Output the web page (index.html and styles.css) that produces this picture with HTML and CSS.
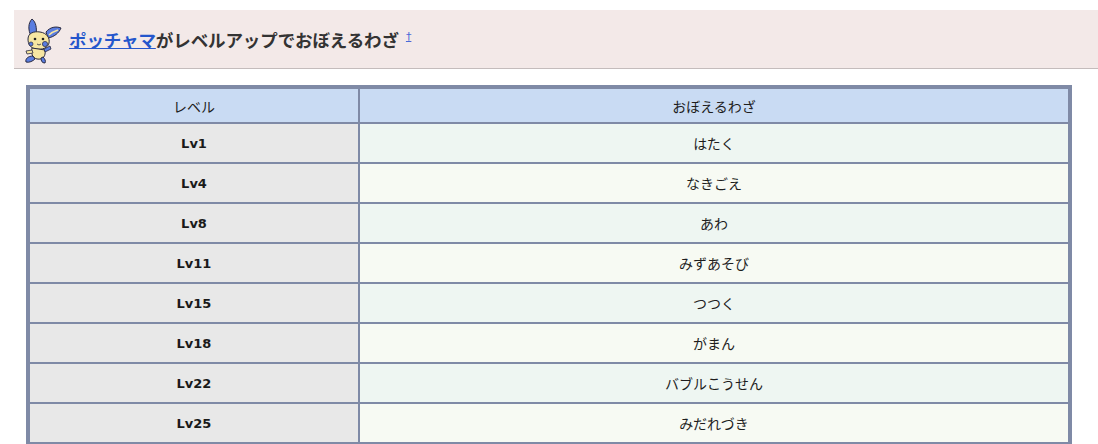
FILE: index.html
```html
<!DOCTYPE html>
<html lang="ja">
<head>
<meta charset="utf-8">
<title>ポッチャマがレベルアップでおぼえるわざ</title>
<link rel="stylesheet" href="styles.css">
</head>
<body>
<div class="page">
  <h2 class="title">
    <svg class="sprite" width="42" height="46" viewBox="0 0 42 46" aria-hidden="true">
      <path d="M10 1 C6 5 6 12 9 18 L14 17 C15 10 14 4 10 1 Z" fill="#5a7de0" stroke="#2a2a40" stroke-width="1"/>
      <path d="M24 14 C28 9 34 8 39 10 C37 15 32 19 26 20 Z" fill="#5a7de0" stroke="#2a2a40" stroke-width="1"/>
      <path d="M27 17 C30 14 33 13 36 12" stroke="#f6e6a2" stroke-width="1.5" fill="none"/>
      <path d="M6 21 C6 15 12 13 18 14 C25 15 28 20 27 25 C26 30 20 32 14 31 C8 30 6 26 6 21 Z" fill="#f6e6a2" stroke="#2a2a40" stroke-width="1"/>
      <circle cx="13" cy="21" r="1.3" fill="#222"/>
      <circle cx="21" cy="21" r="1.3" fill="#222"/>
      <circle cx="23" cy="26" r="2.6" fill="#5a7de0" stroke="#2a2a40" stroke-width="0.7"/>
      <circle cx="9" cy="26" r="2" fill="#5a7de0" stroke="#2a2a40" stroke-width="0.7"/>
      <path d="M15 26 Q17 28 19 26" stroke="#2a2a40" stroke-width="0.8" fill="none"/>
      <path d="M10 30 C9 35 10 40 15 41 C21 42 24 38 23 32 Z" fill="#f6e6a2" stroke="#2a2a40" stroke-width="1"/>
      <path d="M22 31 L28 28 L29 31 L23 34 Z" fill="#5a7de0" stroke="#2a2a40" stroke-width="0.8"/>
      <path d="M10 32 L4 33 L5 36 L11 35 Z" fill="#f6e6a2" stroke="#2a2a40" stroke-width="0.8"/>
      <path d="M11 38 C6 38 3 41 4 44 C7 45 11 43 13 41 Z" fill="#5a7de0" stroke="#2a2a40" stroke-width="1"/>
      <path d="M19 40 C19 43 20 45 23 45 C24 43 23 41 21 39 Z" fill="#5a7de0" stroke="#2a2a40" stroke-width="1"/>
    </svg>
    <span class="title-text"><a class="poke" href="#">ポッチャマ</a>がレベルアップでおぼえるわざ</span>
    <a class="dagger" href="#">†</a>
  </h2>
  <table class="moves">
    <colgroup><col class="c-lv"><col class="c-move"></colgroup>
    <thead>
      <tr><th>レベル</th><th>おぼえるわざ</th></tr>
    </thead>
    <tbody>
      <tr class="odd"><td class="lv">Lv1</td><td class="mv">はたく</td></tr>
      <tr class="even"><td class="lv">Lv4</td><td class="mv">なきごえ</td></tr>
      <tr class="odd"><td class="lv">Lv8</td><td class="mv">あわ</td></tr>
      <tr class="even"><td class="lv">Lv11</td><td class="mv">みずあそび</td></tr>
      <tr class="odd"><td class="lv">Lv15</td><td class="mv">つつく</td></tr>
      <tr class="even"><td class="lv">Lv18</td><td class="mv">がまん</td></tr>
      <tr class="odd"><td class="lv">Lv22</td><td class="mv">バブルこうせん</td></tr>
      <tr class="even"><td class="lv">Lv25</td><td class="mv">みだれづき</td></tr>
    </tbody>
  </table>
</div>
</body>
</html>
```
FILE: styles.css
```css
html, body {
  margin: 0;
  padding: 0;
  background: #ffffff;
}
body {
  font-family: "DejaVu Sans", "Noto Sans CJK JP", sans-serif;
  font-size: 13px;
  color: #222;
}
.page {
  padding-top: 10px;
}
.title {
  margin: 0 0 16px 14px;
  height: 59px;
  box-sizing: border-box;
  background: #f3e9e8;
  border-bottom: 1px solid #c4bcbc;
  display: flex;
  align-items: center;
  padding-left: 8px;
  font-family: "Noto Sans CJK JP", sans-serif;
  font-size: 17.5px;
  font-weight: bold;
  color: #333;
}
.sprite {
  display: block;
  margin-right: 5px;
  margin-top: 4px;
}
.title-text {
  letter-spacing: -0.1px;
}
.poke {
  color: #2456cc;
  text-decoration: underline;
}
.dagger {
  color: #4a6ad8;
  font-family: "DejaVu Sans", sans-serif;
  font-size: 11px;
  font-weight: normal;
  text-decoration: underline;
  align-self: flex-start;
  margin-top: 20px;
  margin-left: 7px;
}
.moves {
  margin-left: 26px;
  width: 1046px;
  table-layout: fixed;
  border-collapse: separate;
  border-spacing: 0;
  border: 3px solid #7f8aa6;
}
.c-lv { width: 330px; }
.moves th, .moves td {
  border: 1px solid #7f8aa6;
  text-align: center;
  padding: 0 4px;
}
.moves th {
  background: #c9dbf3;
  height: 33px;
  font-family: "Noto Sans CJK JP", sans-serif;
  font-weight: normal;
  font-size: 14px;
  color: #1e1e1e;
}
.moves td {
  height: 38px;
}
.moves td.lv {
  background: #e8e8e8;
  font-weight: bold;
  color: #1a1a1a;
}
.moves td.mv {
  font-family: "Noto Sans CJK JP", sans-serif;
  font-size: 14px;
  color: #1e1e1e;
}
.moves tr.odd td.mv { background: #eef6f2; }
.moves tr.even td.mv { background: #f7faf3; }
```
